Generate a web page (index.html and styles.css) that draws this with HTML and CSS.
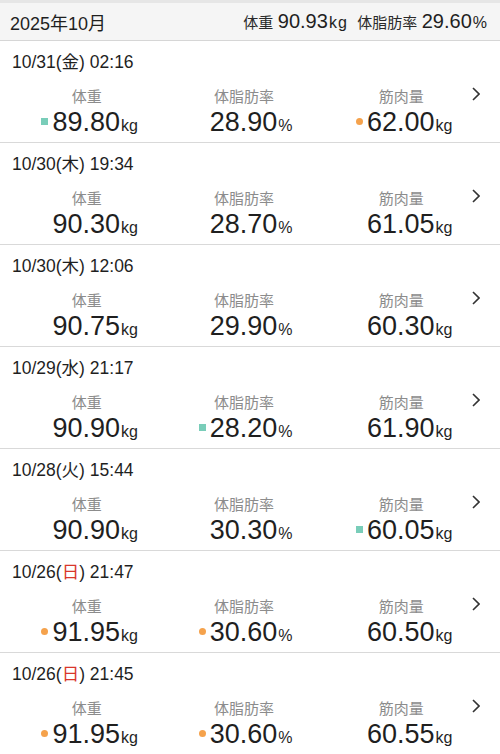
FILE: index.html
```html
<!DOCTYPE html>
<html lang="ja">
  <head>
    <meta charset="UTF-8" />
    <meta name="viewport" content="width=device-width, initial-scale=1.0" />
    <title>体重記録</title>
    <link rel="stylesheet" href="styles.css">
  </head>
  <body>
    <div class="month">
      <div class="month-title">2025年10月</div>
      <div class="month-avg">
        <span class="avg-label">体重</span>
        <span class="avg-num">90.93</span><span class="avg-unit">kg</span>
        <span class="avg-label second">体脂肪率</span>
        <span class="avg-num">29.60</span><span class="avg-unit">%</span>
      </div>
    </div>

    <div class="list">
      <div class="entry">
        <div class="date">10/31(金) 02:16</div>
        <div class="stats">
          <div class="stat">
            <div class="label">体重</div>
            <div class="val"><span class="pre"><i class="mark down"></i></span><span class="num">89.80</span><span class="unit">kg</span></div>
          </div>
          <div class="stat">
            <div class="label">体脂肪率</div>
            <div class="val"><span class="pre"></span><span class="num">28.90</span><span class="unit">%</span></div>
          </div>
          <div class="stat">
            <div class="label">筋肉量</div>
            <div class="val"><span class="pre"><i class="mark up"></i></span><span class="num">62.00</span><span class="unit">kg</span></div>
          </div>
          <div class="more"><svg width="8" height="14" viewBox="0 0 8 14"><path d="M1 1 L7 7 L1 13" /></svg></div>
        </div>
      </div>

      <div class="entry">
        <div class="date">10/30(木) 19:34</div>
        <div class="stats">
          <div class="stat">
            <div class="label">体重</div>
            <div class="val"><span class="pre"></span><span class="num">90.30</span><span class="unit">kg</span></div>
          </div>
          <div class="stat">
            <div class="label">体脂肪率</div>
            <div class="val"><span class="pre"></span><span class="num">28.70</span><span class="unit">%</span></div>
          </div>
          <div class="stat">
            <div class="label">筋肉量</div>
            <div class="val"><span class="pre"></span><span class="num">61.05</span><span class="unit">kg</span></div>
          </div>
          <div class="more"><svg width="8" height="14" viewBox="0 0 8 14"><path d="M1 1 L7 7 L1 13" /></svg></div>
        </div>
      </div>

      <div class="entry">
        <div class="date">10/30(木) 12:06</div>
        <div class="stats">
          <div class="stat">
            <div class="label">体重</div>
            <div class="val"><span class="pre"></span><span class="num">90.75</span><span class="unit">kg</span></div>
          </div>
          <div class="stat">
            <div class="label">体脂肪率</div>
            <div class="val"><span class="pre"></span><span class="num">29.90</span><span class="unit">%</span></div>
          </div>
          <div class="stat">
            <div class="label">筋肉量</div>
            <div class="val"><span class="pre"></span><span class="num">60.30</span><span class="unit">kg</span></div>
          </div>
          <div class="more"><svg width="8" height="14" viewBox="0 0 8 14"><path d="M1 1 L7 7 L1 13" /></svg></div>
        </div>
      </div>

      <div class="entry">
        <div class="date">10/29(水) 21:17</div>
        <div class="stats">
          <div class="stat">
            <div class="label">体重</div>
            <div class="val"><span class="pre"></span><span class="num">90.90</span><span class="unit">kg</span></div>
          </div>
          <div class="stat">
            <div class="label">体脂肪率</div>
            <div class="val"><span class="pre"><i class="mark down"></i></span><span class="num">28.20</span><span class="unit">%</span></div>
          </div>
          <div class="stat">
            <div class="label">筋肉量</div>
            <div class="val"><span class="pre"></span><span class="num">61.90</span><span class="unit">kg</span></div>
          </div>
          <div class="more"><svg width="8" height="14" viewBox="0 0 8 14"><path d="M1 1 L7 7 L1 13" /></svg></div>
        </div>
      </div>

      <div class="entry">
        <div class="date">10/28(火) 15:44</div>
        <div class="stats">
          <div class="stat">
            <div class="label">体重</div>
            <div class="val"><span class="pre"></span><span class="num">90.90</span><span class="unit">kg</span></div>
          </div>
          <div class="stat">
            <div class="label">体脂肪率</div>
            <div class="val"><span class="pre"></span><span class="num">30.30</span><span class="unit">%</span></div>
          </div>
          <div class="stat">
            <div class="label">筋肉量</div>
            <div class="val"><span class="pre"><i class="mark down"></i></span><span class="num">60.05</span><span class="unit">kg</span></div>
          </div>
          <div class="more"><svg width="8" height="14" viewBox="0 0 8 14"><path d="M1 1 L7 7 L1 13" /></svg></div>
        </div>
      </div>

      <div class="entry">
        <div class="date">10/26(<span class="sun">日</span>) 21:47</div>
        <div class="stats">
          <div class="stat">
            <div class="label">体重</div>
            <div class="val"><span class="pre"><i class="mark up"></i></span><span class="num">91.95</span><span class="unit">kg</span></div>
          </div>
          <div class="stat">
            <div class="label">体脂肪率</div>
            <div class="val"><span class="pre"><i class="mark up"></i></span><span class="num">30.60</span><span class="unit">%</span></div>
          </div>
          <div class="stat">
            <div class="label">筋肉量</div>
            <div class="val"><span class="pre"></span><span class="num">60.50</span><span class="unit">kg</span></div>
          </div>
          <div class="more"><svg width="8" height="14" viewBox="0 0 8 14"><path d="M1 1 L7 7 L1 13" /></svg></div>
        </div>
      </div>

      <div class="entry">
        <div class="date">10/26(<span class="sun">日</span>) 21:45</div>
        <div class="stats">
          <div class="stat">
            <div class="label">体重</div>
            <div class="val"><span class="pre"><i class="mark up"></i></span><span class="num">91.95</span><span class="unit">kg</span></div>
          </div>
          <div class="stat">
            <div class="label">体脂肪率</div>
            <div class="val"><span class="pre"><i class="mark up"></i></span><span class="num">30.60</span><span class="unit">%</span></div>
          </div>
          <div class="stat">
            <div class="label">筋肉量</div>
            <div class="val"><span class="pre"></span><span class="num">60.55</span><span class="unit">kg</span></div>
          </div>
          <div class="more"><svg width="8" height="14" viewBox="0 0 8 14"><path d="M1 1 L7 7 L1 13" /></svg></div>
        </div>
      </div>
    </div>
  </body>
</html>
```

FILE: styles.css
```css
* {
  margin: 0px;
  padding: 0px;
  box-sizing: border-box;
}
body {
  width: 500px;
  height: 754px;
  overflow: hidden;
  background: #ffffff;
  color: #1f1f1f;
  font-family: "Liberation Sans", "Noto Sans CJK JP", sans-serif;
}

.month {
  height: 41px;
  border-top: 3px solid #e6e6e6;
  border-bottom: 1px solid #d6d6d6;
  background: #f5f5f5;
  display: flex;
  justify-content: space-between;
  align-items: center;
  padding: 0 12px 0 10px;
}
.month-title {
  font-size: 18px;
}
.month-avg {
  white-space: nowrap;
}
.avg-label {
  font-size: 15px;
  color: #2a2a2a;
}
.avg-label.second {
  margin-left: 5px;
}
.avg-num {
  font-size: 20px;
}
.avg-unit {
  font-size: 16px;
  letter-spacing: 1px;
  margin-left: 1px;
}

.entry {
  height: 102px;
  border-bottom: 1px solid #d9d9d9;
  padding-top: 11px;
}
.date {
  font-size: 17.5px;
  line-height: 20px;
  padding-left: 12px;
}
.sun {
  color: #d9362b;
}

.stats {
  display: grid;
  grid-template-columns: repeat(3, 1fr) 12px;
  padding: 0 8px;
  margin-top: 15px;
}
.stat {
  display: flex;
  flex-direction: column;
}
.label {
  text-align: center;
  font-size: 15px;
  line-height: 20px;
  color: #8c8c8c;
}
.val {
  display: flex;
  align-items: baseline;
  line-height: 30px;
}
.pre,
.unit {
  flex: 1;
}
.pre {
  text-align: right;
}
.num {
  font-size: 27px;
}
.unit {
  font-size: 16px;
  padding-left: 1px;
}
.mark {
  display: inline-block;
  width: 7px;
  height: 7px;
  margin: 0 4px 6px 0;
}
.mark.down {
  background: #79cdb9;
}
.mark.up {
  border-radius: 50%;
  background: #f5a24c;
}

.more {
  margin-left: -8px;
}
.more svg {
  display: block;
}
.more path {
  fill: none;
  stroke: #333;
  stroke-width: 1.6;
}
```
